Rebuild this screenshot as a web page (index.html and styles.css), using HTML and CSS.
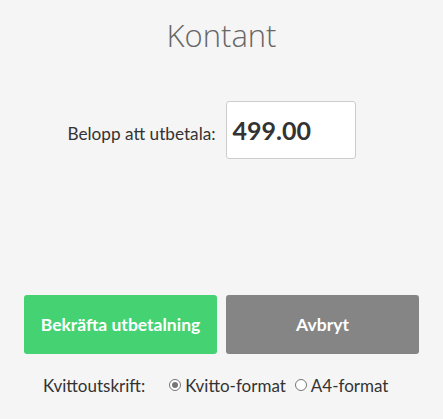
FILE: index.html
```html
<!DOCTYPE html>
<html lang="sv">
<head>
<meta charset="utf-8">
<link rel="stylesheet" href="styles.css">
</head>
<body>
<div class="page">
  <h1 class="title">Kontant</h1>
  <div class="amount-row">
    <label class="amount-label">Belopp att utbetala:</label>
    <div class="amount-input">499.00</div>
  </div>
  <div class="buttons">
    <button class="btn btn-confirm">Bekräfta utbetalning</button>
    <button class="btn btn-cancel">Avbryt</button>
  </div>
  <div class="receipt">
    <span class="receipt-label">Kvittoutskrift:</span>
    <label class="opt"><span class="radio checked"></span>Kvitto-format</label>
    <label class="opt"><span class="radio"></span>A4-format</label>
  </div>
</div>
</body>
</html>
```
FILE: styles.css
```css
html, body {
  margin: 0;
  padding: 0;
  background: #f5f5f5;
}
body {
  font-family: "Lato", "Noto Sans", sans-serif;
  color: #333;
  width: 443px;
  height: 419px;
  overflow: hidden;
}
.page {
  padding: 0 24px;
}
.title {
  margin: 0;
  padding-top: 14px;
  height: 44px;
  text-align: center;
  font-family: "Open Sans", sans-serif;
  font-weight: 300;
  font-size: 31px;
  line-height: 42px;
  color: #666;
}
.amount-row {
  margin-top: 43px;
  display: flex;
  justify-content: center;
  align-items: center;
  gap: 10px;
  padding-right: 20px;
}
.amount-label {
  font-size: 17.2px;
  color: #333;
  padding-top: 6px;
}
.amount-input {
  box-sizing: border-box;
  width: 130px;
  height: 58px;
  background: #fff;
  border: 1px solid #ccc;
  border-radius: 3px;
  padding: 0 0 0 6px;
  font-size: 25px;
  font-weight: 700;
  line-height: 56px;
  color: #333;
}
.buttons {
  margin-top: 136px;
  display: flex;
  gap: 9px;
}
.btn {
  flex: 0 0 193px;
  height: 59px;
  border: none;
  border-radius: 3px;
  color: #fff;
  font-family: "Lato", "Noto Sans", sans-serif;
  font-weight: 700;
  font-size: 17.5px;
  padding: 0;
}
.btn-confirm { background: #44d273; }
.btn-cancel { background: #858585; }
.receipt {
  margin-top: 19px;
  display: flex;
  align-items: center;
  padding-left: 19px;
  font-size: 17px;
  color: #333;
  height: 24px;
}
.receipt-label {
  margin-right: 24px;
}
.opt {
  display: flex;
  align-items: center;
  margin-right: 9px;
}
.radio {
  box-sizing: border-box;
  width: 12px;
  height: 12px;
  border: 1px solid #767676;
  border-radius: 50%;
  background: #fff;
  margin-right: 4px;
  position: relative;
}
.radio.checked::after {
  content: "";
  position: absolute;
  left: 2px;
  top: 2px;
  width: 6px;
  height: 6px;
  border-radius: 50%;
  background: #767676;
}
```
